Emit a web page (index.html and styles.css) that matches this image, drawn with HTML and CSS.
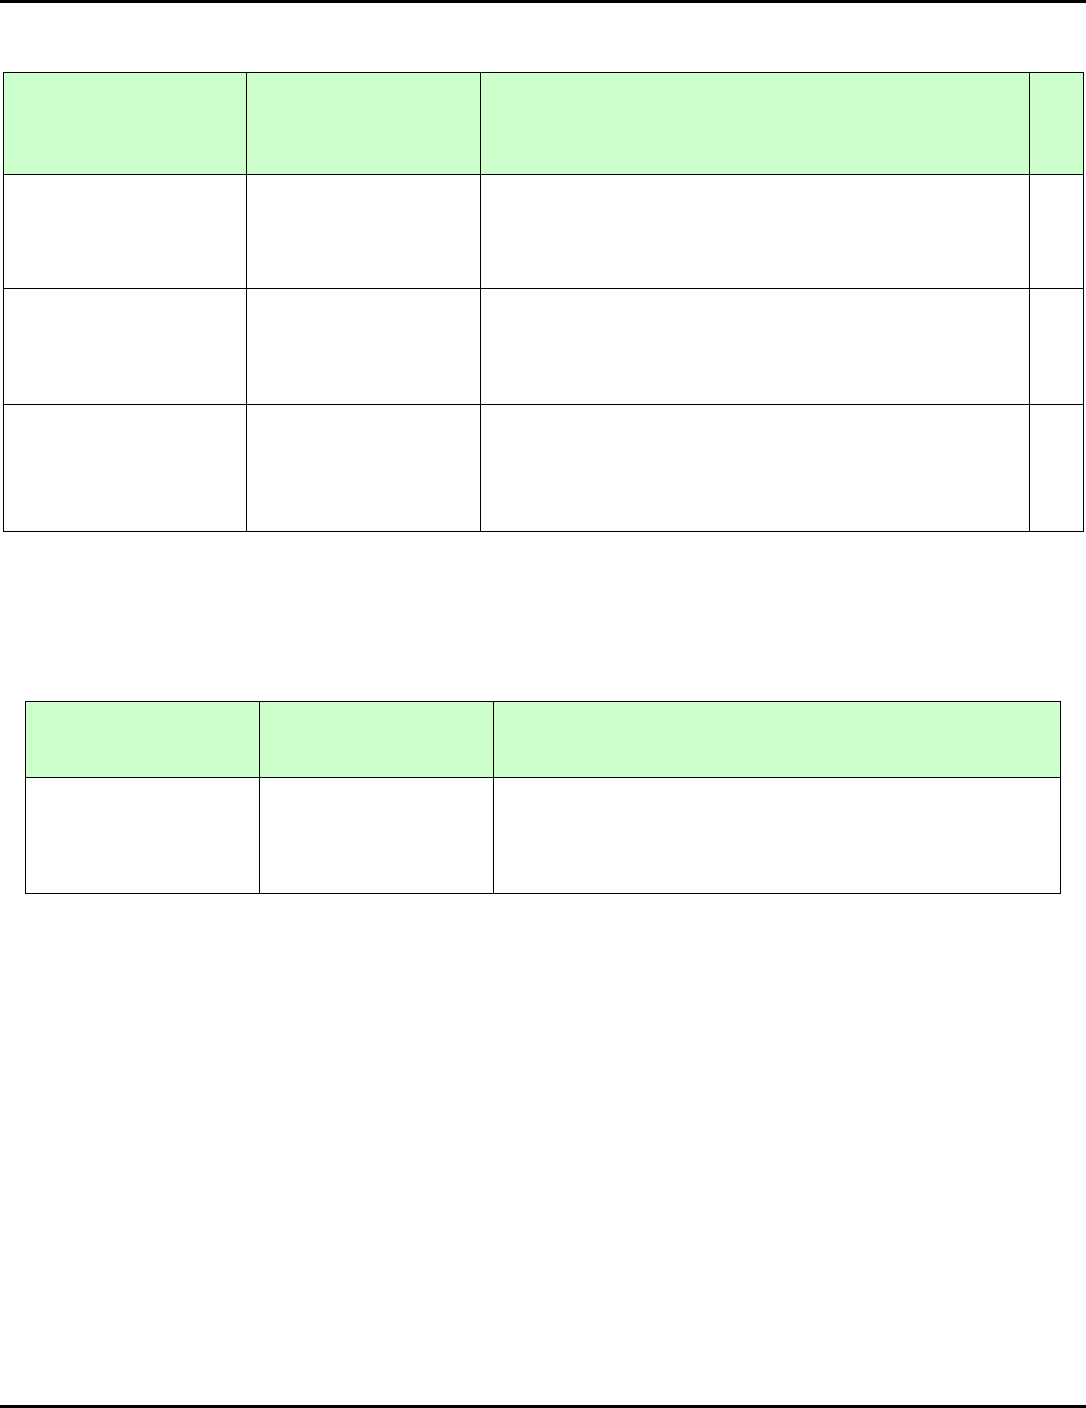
FILE: index.html
```html
<!DOCTYPE html>
<html lang="en">
<head>
<meta charset="utf-8">
<title>Tables</title>
<link rel="stylesheet" href="styles.css">
</head>
<body>
<div class="page">
  <div class="rule-top"></div>
  <div class="grid grid-a">
    <div class="cell head"></div>
    <div class="cell head"></div>
    <div class="cell head"></div>
    <div class="cell head"></div>
    <div class="cell"></div>
    <div class="cell"></div>
    <div class="cell"></div>
    <div class="cell"></div>
    <div class="cell"></div>
    <div class="cell"></div>
    <div class="cell"></div>
    <div class="cell"></div>
    <div class="cell"></div>
    <div class="cell"></div>
    <div class="cell"></div>
    <div class="cell"></div>
  </div>
  <div class="grid grid-b">
    <div class="cell head"></div>
    <div class="cell head"></div>
    <div class="cell head"></div>
    <div class="cell"></div>
    <div class="cell"></div>
    <div class="cell"></div>
  </div>
  <div class="rule-bottom"></div>
</div>
</body>
</html>
```
FILE: styles.css
```css
html, body {
  margin: 0;
  padding: 0;
  background: #ffffff;
  font-family: "Liberation Sans", Arial, sans-serif;
}
.page {
  display: flex;
  flex-direction: column;
  min-height: 1408px;
  box-sizing: border-box;
}
.rule-top {
  height: 3px;
  background: #000000;
}
.grid {
  display: grid;
  background: #000000;
  padding: 1px;
  gap: 1px;
  align-self: flex-start;
}
.grid-a {
  margin-top: 69px;
  margin-left: 3px;
  grid-template-columns: 242px 233px 548px 53px;
  grid-template-rows: 101px 113px 115px 126px;
}
.grid-b {
  margin-top: 169px;
  margin-left: 25px;
  grid-template-columns: 233px 233px 566px;
  grid-template-rows: 75px 115px;
}
.cell {
  background: #ffffff;
}
.cell.head {
  background: #ccffcc;
}
.rule-bottom {
  margin-top: auto;
  margin-bottom: 0;
  height: 3px;
  background: #000000;
}
```
